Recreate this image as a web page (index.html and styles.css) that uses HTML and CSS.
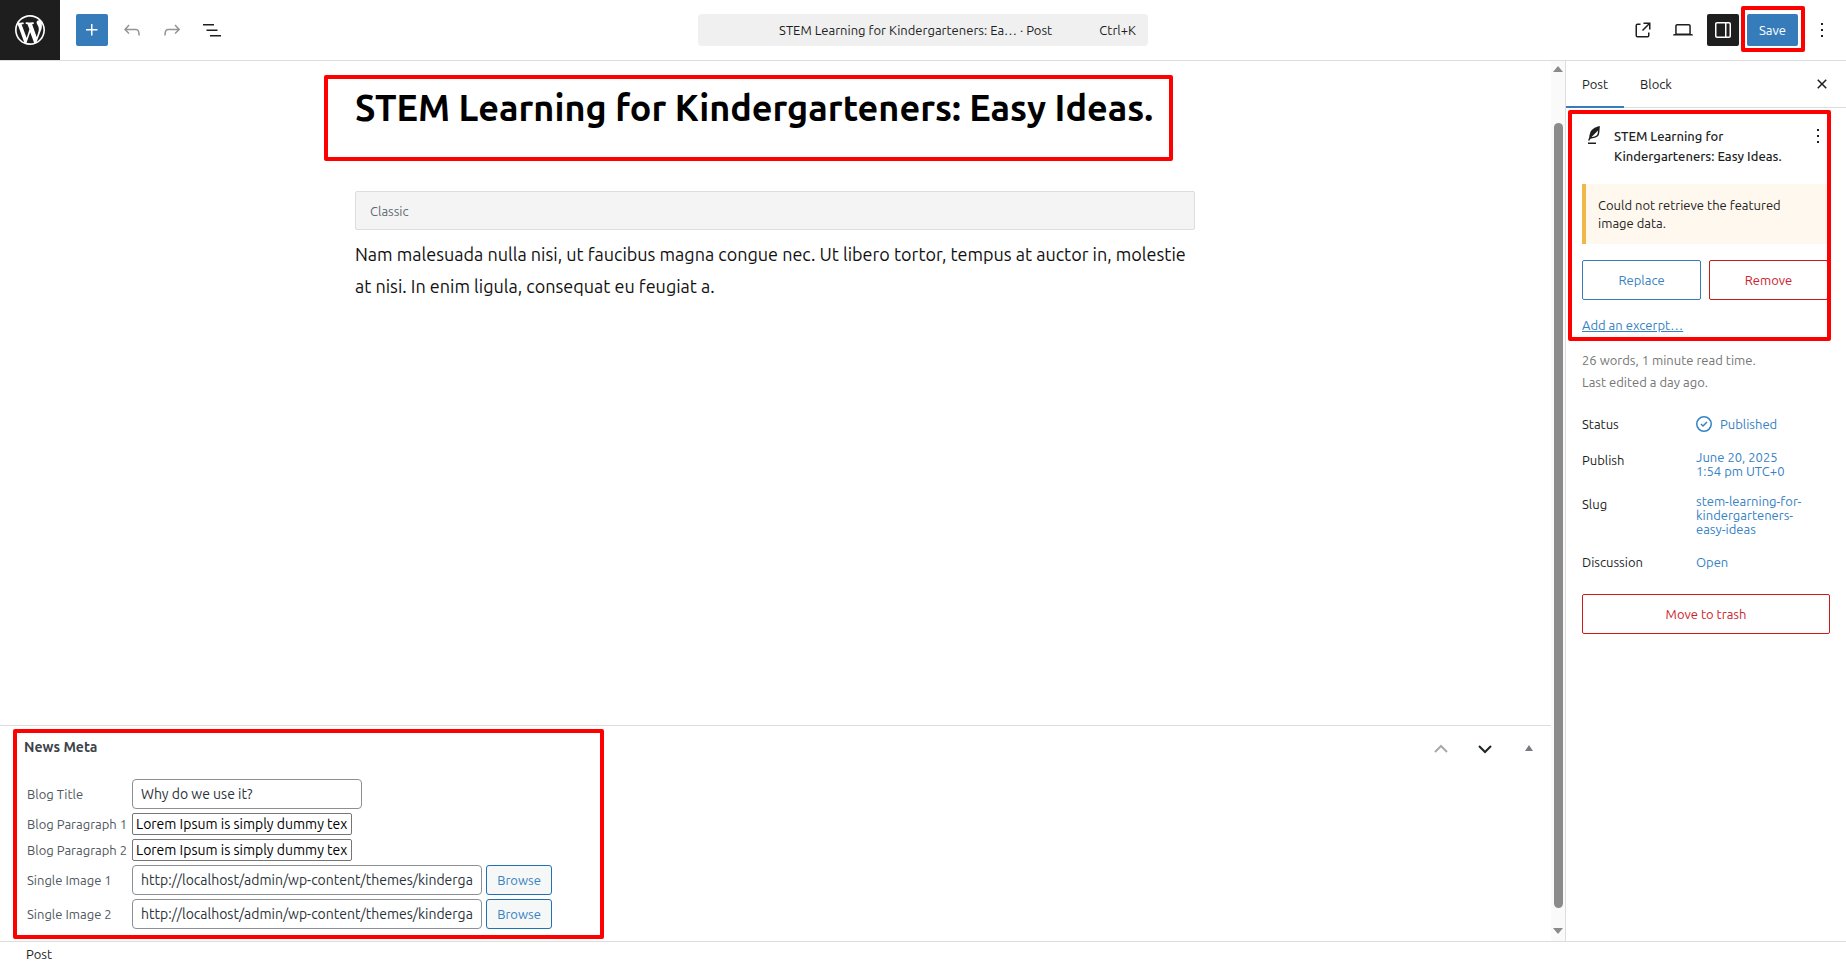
FILE: index.html
```html
<!DOCTYPE html>
<html lang="en">
<head>
  <meta charset="utf-8">
  <title>Edit Post</title>
  <link rel="stylesheet" href="styles.css">
</head>
<body>
  <header class="header">
    <a class="site-icon" href="#" aria-label="View Posts">
      <svg width="36" height="36" viewBox="-2 -2 24 24"><path d="M20 10c0-5.51-4.49-10-10-10C4.48 0 0 4.49 0 10c0 5.52 4.48 10 10 10 5.51 0 10-4.48 10-10zM7.78 15.37L4.37 6.22c.55-.02 1.17-.08 1.17-.08.5-.06.44-1.13-.06-1.11 0 0-1.45.11-2.37.11-.18 0-.37 0-.58-.01C4.12 2.69 6.87 1.11 10 1.11c2.33 0 4.45.87 6.05 2.34-.68-.11-1.65.39-1.65 1.58 0 .74.45 1.36.9 2.1.35.61.55 1.36.55 2.46 0 1.49-1.4 5-1.4 5l-3.03-8.37c.54-.02.82-.17.82-.17.5-.05.44-1.25-.06-1.22 0 0-1.44.12-2.38.12-.87 0-2.33-.12-2.33-.12-.5-.03-.56 1.2-.06 1.22l.92.08 1.26 3.41zM17.41 10c.24-.64.74-1.87.43-4.25.7 1.29 1.05 2.71 1.05 4.25 0 3.29-1.73 6.24-4.4 7.78.97-2.59 1.94-5.2 2.92-7.78zM6.1 18.09C3.12 16.65 1.11 13.53 1.11 10c0-1.3.23-2.48.72-3.59C3.25 10.3 4.67 14.2 6.1 18.09zm4.03-6.63l2.58 6.98c-.86.29-1.76.45-2.71.45-.79 0-1.57-.11-2.29-.33.81-2.38 1.62-4.74 2.42-7.1z"/></svg>
    </a>
    <div class="tools">
      <button class="icon-btn primary" aria-label="Block Inserter">
        <svg width="24" height="24" viewBox="0 0 24 24"><path d="M11 12.5V17.5H12.5V12.5H17.5V11H12.5V6H11V11H6V12.5H11Z"/></svg>
      </button>
      <button class="icon-btn" aria-label="Undo" disabled>
        <svg width="24" height="24" viewBox="0 0 24 24"><path d="M18.3 11.7c-.6-.6-1.4-.9-2.3-.9H6.7l2.9-3.3-1.1-1-4.5 5L8.5 16l1-1-2.7-2.7H16c.5 0 .9.2 1.3.5 1 1 1 3.4 1 4.5v.3h1.5v-.2c0-1.5 0-4.3-1.5-5.7z"/></svg>
      </button>
      <button class="icon-btn" aria-label="Redo" disabled>
        <svg width="24" height="24" viewBox="0 0 24 24"><path d="M15.6 6.5l-1.1 1 2.9 3.3H8c-.9 0-1.7.3-2.3.9-1.4 1.5-1.4 4.2-1.4 5.6v.2h1.5v-.3c0-1.1 0-3.5 1-4.5.3-.3.7-.5 1.3-.5h9.2L14.5 15l1.1 1.1 4.6-4.6-4.6-5z"/></svg>
      </button>
      <button class="icon-btn" aria-label="Document Overview">
        <svg width="24" height="24" viewBox="0 0 24 24"><path d="M3 6h11v1.5H3V6Zm3.5 5.5h11V13h-11v-1.5ZM21 17H10v1.5h11V17Z"/></svg>
      </button>
    </div>
    <button class="command-bar">
      <span class="document-title">STEM Learning for Kindergarteners: Ea… · Post</span>
      <span class="shortcut">Ctrl+K</span>
    </button>
    <div class="settings">
      <a class="icon-btn" href="#" aria-label="View Post">
        <svg width="24" height="24" viewBox="0 0 24 24"><path d="M19.5 4.5h-7V6h4.44l-5.97 5.97 1.06 1.06L18 7.06v4.44h1.5v-7Zm-13 1a2 2 0 0 0-2 2v10a2 2 0 0 0 2 2h10a2 2 0 0 0 2-2v-3H17v3a.5.5 0 0 1-.5.5h-10a.5.5 0 0 1-.5-.5v-10a.5.5 0 0 1 .5-.5h3V5.5h-3Z"/></svg>
      </a>
      <button class="icon-btn" aria-label="View">
        <svg width="24" height="24" viewBox="0 0 24 24"><path d="M20.5 16h-.7V8c0-1.1-.9-2-2-2H6.2c-1.1 0-2 .9-2 2v8h-.7c-.8 0-1.5.7-1.5 1.5h20c0-.8-.7-1.5-1.5-1.5zM5.7 8c0-.3.2-.5.5-.5h11.6c.3 0 .5.2.5.5v7.6H5.7V8z"/></svg>
      </button>
      <button class="icon-btn pressed" aria-label="Settings">
        <svg width="24" height="24" viewBox="0 0 24 24"><path fill-rule="evenodd" d="M18 4H6c-1.1 0-2 .9-2 2v12c0 1.1.9 2 2 2h12c1.1 0 2-.9 2-2V6c0-1.1-.9-2-2-2zm-4 14.5H6c-.3 0-.5-.2-.5-.5V6c0-.3.2-.5.5-.5h8v13zm4.5-.5c0 .3-.2.5-.5.5h-2.5v-13H18c.3 0 .5.2.5.5v12z"/></svg>
      </button>
      <div class="marked mark-save">
        <button class="save">Save</button>
      </div>
      <button class="icon-btn" aria-label="Options">
        <svg width="24" height="24" viewBox="0 0 24 24"><path d="M13 19h-2v-2h2v2zm0-6h-2v-2h2v2zm0-6h-2V5h2v2z"/></svg>
      </button>
    </div>
  </header>

  <div class="body">
    <main class="editor">
      <div class="canvas">
        <div class="column">
          <div class="marked mark-title">
            <h1>STEM Learning for Kindergarteners: Easy Ideas.</h1>
          </div>
          <div class="classic">Classic</div>
          <p>Nam malesuada nulla nisi, ut faucibus magna congue nec. Ut libero tortor, tempus at auctor in, molestie at nisi. In enim ligula, consequat eu feugiat a.</p>
        </div>
      </div>

      <section class="metabox">
        <div class="marked mark-meta">
          <h2>News Meta</h2>
          <form class="fields">
            <label for="blog-title">Blog Title</label>
            <div><input class="wp-input" id="blog-title" type="text" value="Why do we use it?"></div>
            <label for="paragraph-1">Blog Paragraph 1</label>
            <div><input class="plain-input" id="paragraph-1" value="Lorem Ipsum is simply dummy text of the printing"></div>
            <label for="paragraph-2">Blog Paragraph 2</label>
            <div><input class="plain-input" id="paragraph-2" value="Lorem Ipsum is simply dummy text of the printing"></div>
            <label for="image-1">Single Image 1</label>
            <div><input class="wp-input wide" id="image-1" type="text" value="http://localhost/admin/wp-content/themes/kindergarten"><button class="browse" type="button">Browse</button></div>
            <label for="image-2">Single Image 2</label>
            <div><input class="wp-input wide" id="image-2" type="text" value="http://localhost/admin/wp-content/themes/kindergarten"><button class="browse" type="button">Browse</button></div>
          </form>
        </div>
        <div class="handles">
          <button aria-label="Move up" disabled>
            <svg width="20" height="20" viewBox="0 0 20 20"><path class="chevron" d="M4 13l6-6 6 6"/></svg>
          </button>
          <button aria-label="Move down">
            <svg width="20" height="20" viewBox="0 0 20 20"><path class="chevron" d="M4 7l6 6 6-6"/></svg>
          </button>
          <button class="toggle" aria-label="Toggle panel: News Meta">
            <svg width="20" height="20" viewBox="0 0 20 20"><path d="M6 12l4-6 4 6z"/></svg>
          </button>
        </div>
      </section>
    </main>

    <div class="scrollbar">
      <svg width="10" height="6" viewBox="0 0 10 6"><path d="M0 6l5-6 5 6z"/></svg>
      <div class="thumb"></div>
      <svg width="10" height="6" viewBox="0 0 10 6"><path d="M0 0l5 6 5-6z"/></svg>
    </div>

    <aside class="sidebar">
      <div class="tabs">
        <button class="tab active">Post</button>
        <button class="tab">Block</button>
        <button class="icon-btn close" aria-label="Close Settings">
          <svg width="24" height="24" viewBox="0 0 24 24"><path d="M12 13.06l3.712 3.713 1.061-1.06L13.061 12l3.712-3.712-1.06-1.06L12 10.938 8.288 7.227l-1.061 1.06L10.939 12l-3.712 3.712 1.06 1.061L12 13.061z"/></svg>
        </button>
      </div>
      <div class="panel">
        <div class="marked mark-summary">
          <div class="card">
            <svg width="24" height="24" viewBox="0 0 24 24"><path d="M17.8 2l-.9.3c-.1 0-3.6 1-5.2 2.1C10 5.5 9.3 6.5 8.9 7.1c-.6.9-1.7 4.7-1.7 6.3l-.9 2.3c-.2.4 0 .8.4 1 .1 0 .2.1.3.1.3 0 .6-.2.7-.5l.6-1.5c.3 0 .7-.1 1.2-.2.7-.1 1.4-.3 2.2-.5.8-.2 1.6-.5 2.4-.8.7-.3 1.4-.7 1.9-1.2s.8-1.2 1-1.9c.2-.7.3-1.6.4-2.4.1-.8.1-1.7.2-2.5 0-.8.1-1.5.2-2.1V2zm-1.9 5.6c-.1.8-.2 1.5-.3 2.1-.2.6-.4 1-.6 1.3-.3.3-.8.6-1.4.9-.7.3-1.4.5-2.2.8-.6.2-1.3.3-1.8.4L15 7.5c.3-.3.6-.7 1-1.1 0 .4 0 .8-.1 1.2zM6 20h8v-1.5H6V20z"/></svg>
            <h2>STEM Learning for Kindergarteners: Easy Ideas.</h2>
            <button class="card-menu" aria-label="Actions">
              <svg width="24" height="24" viewBox="0 0 24 24"><path d="M13 19h-2v-2h2v2zm0-6h-2v-2h2v2zm0-6h-2V5h2v2z"/></svg>
            </button>
          </div>
          <div class="notice">Could not retrieve the featured image data.</div>
          <div class="image-actions">
            <button class="outline">Replace</button>
            <button class="outline danger">Remove</button>
          </div>
          <a class="excerpt" href="#">Add an excerpt…</a>
        </div>
        <div class="info">
          <div>26 words, 1 minute read time.</div>
          <div>Last edited a day ago.</div>
        </div>
        <dl class="rows">
          <dt>Status</dt>
          <dd><a class="status" href="#"><svg width="24" height="24" viewBox="0 0 24 24"><path fill-rule="evenodd" d="M12 18.5a6.5 6.5 0 1 1 0-13 6.5 6.5 0 0 1 0 13ZM4 12a8 8 0 1 1 16 0 8 8 0 0 1-16 0Zm11.53-1.47-1.06-1.06L11 12.94l-1.47-1.47-1.06 1.06L11 15.06l4.53-4.53Z"/></svg>Published</a></dd>
          <dt>Publish</dt>
          <dd><a href="#">June 20, 2025<br>1:54 pm UTC+0</a></dd>
          <dt>Slug</dt>
          <dd><a href="#">stem-learning-for-kindergarteners-easy-ideas</a></dd>
          <dt>Discussion</dt>
          <dd><a href="#">Open</a></dd>
        </dl>
        <button class="outline danger trash">Move to trash</button>
      </div>
    </aside>
  </div>

  <footer class="footer">Post</footer>
</body>
</html>
```

FILE: styles.css
```css
* {
  box-sizing: border-box;
}
body {
  margin: 0;
  height: 100vh;
  display: flex;
  flex-direction: column;
  background: #fff;
  color: #1e1e1e;
  font: 13px/20px Ubuntu, "Noto Sans", sans-serif;
}
h1, h2, p, dl, dd {
  margin: 0;
}
button, input {
  font: inherit;
  color: inherit;
}
button {
  padding: 0;
  border: 0;
  background: none;
}
a {
  color: #3582c4;
  text-decoration: none;
}
svg {
  display: block;
  fill: currentColor;
}

/* red highlight frames */
.marked {
  position: relative;
}
.marked::after {
  content: "";
  position: absolute;
  border: 4px solid #f00;
  border-radius: 2px;
  pointer-events: none;
}
.mark-save::after {
  inset: -8px -7px -6px -6px;
}
.mark-title::after {
  inset: 14px 22px 0 -31px;
}
.mark-meta::after {
  inset: 3px 0 2px 13px;
}
.mark-summary::after {
  inset: -14px -1px -6px -14px;
}

/* header */
.header {
  display: grid;
  grid-template-columns: 60px minmax(0, 1fr) 450px minmax(0, 1fr) 60px;
  align-items: center;
  border-bottom: 1px solid #ddd;
}
.site-icon {
  display: flex;
  align-items: center;
  justify-content: center;
  height: 60px;
  background: #1e1e1e;
  color: #fff;
}
.tools {
  display: flex;
  gap: 8px;
  padding-left: 16px;
}
.settings {
  grid-column: 4 / 6;
  display: flex;
  justify-content: flex-end;
  gap: 8px;
  padding-right: 8px;
}
.icon-btn {
  display: flex;
  align-items: center;
  justify-content: center;
  width: 32px;
  height: 32px;
  border-radius: 2px;
  color: #1e1e1e;
}
.icon-btn:disabled {
  color: #949494;
}
.icon-btn.primary {
  background: #367cbb;
  color: #fff;
}
.icon-btn.pressed {
  background: #1e1e1e;
  color: #fff;
}
.command-bar {
  display: flex;
  align-items: center;
  height: 32px;
  padding: 0 12px 0 34px;
  border-radius: 4px;
  background: #f0f0f0;
}
.document-title {
  flex: 1;
}
.save {
  height: 32px;
  padding: 0 12px;
  border-radius: 2px;
  background: #367cbb;
  color: #fff;
}

/* editor */
.body {
  flex: 1;
  display: flex;
  min-height: 0;
}
.editor {
  flex: 1;
  display: flex;
  flex-direction: column;
  min-width: 0;
}
.canvas {
  flex: 1;
  padding-right: 1px;
}
.column {
  max-width: 840px;
  margin: 0 auto;
}
.mark-title {
  height: 100px;
  padding-top: 22px;
}
h1 {
  font-size: 36px;
  line-height: 50px;
  font-weight: 600;
  color: #000;
  white-space: nowrap;
}
.classic {
  margin-top: 30px;
  padding: 9px 14px 8px;
  border: 1px solid #ddd;
  border-radius: 2px;
  background: #f4f4f4;
  color: #606a74;
}
.column p {
  margin-top: 8px;
  font-size: 18px;
  line-height: 32px;
  color: #111;
}

/* meta box */
.metabox {
  display: flex;
  align-items: flex-start;
  justify-content: space-between;
  border-top: 1px solid #ddd;
}
.mark-meta {
  width: 604px;
  padding: 11px 0 12px 24px;
}
.mark-meta h2 {
  font-size: 14px;
  line-height: 20px;
  font-weight: 600;
  color: #3c434a;
}
.fields {
  display: grid;
  grid-template-columns: 101px 1fr;
  gap: 4px;
  align-items: center;
  margin-top: 22px;
  padding-left: 3px;
  color: #50575e;
}
.fields label {
  white-space: nowrap;
}
.fields div {
  display: flex;
  gap: 4px;
}
.wp-input {
  width: 230px;
  height: 30px;
  padding: 0 8px;
  border: 1px solid #8c8f94;
  border-radius: 4px;
  background: #fff;
  color: #2c3338;
  font-size: 14px;
}
.wide {
  width: 350px;
}
.plain-input {
  width: 220px;
  height: 22px;
  padding: 0 3px;
  border: 1px solid #767676;
  border-radius: 2px;
  background: #fff;
  color: #000;
  font-size: 14px;
}
.browse {
  width: 66px;
  height: 30px;
  border: 1px solid #2271b1;
  border-radius: 3px;
  background: #f6f7f7;
  color: #3582c4;
}
.handles {
  display: flex;
  gap: 24px;
  padding: 13px 12px 0 0;
  color: #1d2327;
}
.handles button:disabled {
  color: #a7aaad;
}
.handles .toggle {
  color: #787c82;
}
.chevron {
  fill: none;
  stroke: currentColor;
  stroke-width: 2;
}

.scrollbar {
  display: flex;
  flex-direction: column;
  align-items: center;
  width: 14px;
  padding: 5px 0 7px;
  background: #fafafa;
  color: #8b8b8b;
}
.thumb {
  flex: 1;
  width: 9px;
  margin: 51px 0 20px;
  border-radius: 5px;
  background: #8b8b8b;
}

/* sidebar */
.sidebar {
  width: 281px;
  border-left: 1px solid #ddd;
}
.tabs {
  display: flex;
  align-items: center;
  height: 47px;
  padding-right: 8px;
  border-bottom: 1px solid #ddd;
}
.tab {
  height: 47px;
  padding: 0 16px;
}
.tab.active {
  box-shadow: inset 0 -2px #367cbb;
}
.close {
  margin-left: auto;
}
.panel {
  padding: 16px;
}
.card {
  display: grid;
  grid-template-columns: 24px 1fr 24px;
  gap: 8px;
}
.card h2 {
  font-size: 13px;
  line-height: 20px;
  font-weight: 500;
  padding-top: 2px;
}
.card-menu {
  align-self: start;
}
.notice {
  margin-top: 18px;
  padding: 12px;
  border-left: 4px solid #f0b849;
  background: #fef8ee;
  line-height: 18px;
}
.image-actions {
  display: grid;
  grid-template-columns: 1fr 1fr;
  gap: 8px;
  margin-top: 16px;
  padding-right: 2px;
}
.outline {
  height: 40px;
  border: 1px solid #367cbb;
  border-radius: 2px;
  color: #3582c4;
}
.outline.danger {
  border-color: #cc1818;
  color: #cc1e2e;
}
.excerpt {
  display: block;
  margin-top: 15px;
  text-decoration: underline;
}
.info {
  margin-top: 14px;
  line-height: 22px;
  color: #757575;
}
.rows {
  display: grid;
  grid-template-columns: 106px 1fr;
  row-gap: 4px;
  margin-top: 15px;
}
.rows dt {
  padding-top: 6px;
}
.rows dd {
  display: flex;
  align-items: center;
  min-height: 32px;
  padding: 6px 12px 6px 8px;
  line-height: 14px;
}
.status {
  display: flex;
  align-items: center;
  gap: 4px;
  margin: -2px 0 -2px -4px;
}
.trash {
  width: 100%;
  margin-top: 16px;
}

.footer {
  padding: 2px 26px;
  border-top: 1px solid #ddd;
}
```
